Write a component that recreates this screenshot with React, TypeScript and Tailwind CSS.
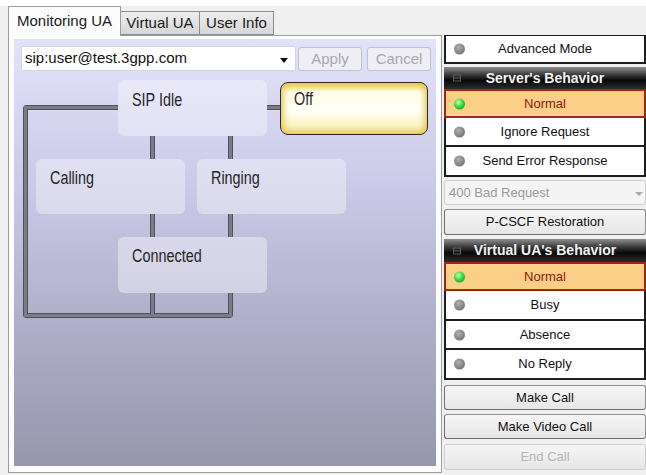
import React from 'react';

const UI_FONT = { fontFamily: '"Liberation Sans", Arial, sans-serif' };
const STATE_FONT = 'font-["Liberation_Sans",Arial,sans-serif] text-[18px] leading-[20px] text-[#262626] inline-block scale-x-[0.8] origin-left';

function Dot({ on }: { on?: boolean }) {
  return (
    <span
      className={`absolute left-[8px] top-1/2 -translate-y-1/2 w-[11px] h-[11px] rounded-full ${
        on
          ? 'bg-[radial-gradient(circle_at_40%_35%,#c8ffc0_0%,#35d93f_45%,#118a1a_100%)]'
          : 'bg-[radial-gradient(circle_at_40%_35%,#b0b0b0_0%,#858585_55%,#6c6c6c_100%)]'
      }`}
    />
  );
}

function RadioRow({ label, on, h, first }: { label: string; on?: boolean; h: string; first?: boolean }) {
  return (
    <div
      className={`relative flex items-center justify-center text-[13px] ${h} ${
        on
          ? 'bg-[#fccf88] text-[#8b1a10] border-2 border-[#9b2818]'
          : `bg-white text-[#111] border-x-2 border-b-2 border-[#1e1e1e] ${first ? 'border-t' : ''}`
      }`}
    >
      <Dot on={on} />
      <span>{label}</span>
    </div>
  );
}

function Header({ label, h }: { label: string; h: string }) {
  return (
    <div className={`relative flex items-center justify-center ${h} bg-[linear-gradient(#8e8e8e,#3a3a3a_35%,#080808_60%,#2c2c2c)]`}>
      <span className="absolute left-[9px] top-1/2 -translate-y-1/2 w-[8px] h-[7px] border border-[#5e5e5e] flex items-center">
        <span className="w-full h-px bg-[#5e5e5e]" />
      </span>
      <span className="text-[14px] font-bold text-[#f2f2f2]">{label}</span>
    </div>
  );
}

function Btn({ label, disabled, h, mt }: { label: string; disabled?: boolean; h: string; mt: string }) {
  return (
    <div
      className={`${h} ${mt} flex items-center justify-center text-[13px] rounded-[3px] border bg-[linear-gradient(#f6f6f6,#e6e6e6)] ${
        disabled ? 'text-[#b4b4b4] border-[#cdcdcd]' : 'text-[#111] border-[#8e8e8e] border-l-[#6e6e6e] border-b-[#6e6e6e]'
      }`}
    >
      {label}
    </div>
  );
}

function StateBox({ label, cls }: { label: string; cls: string }) {
  return (
    <div className={`absolute w-[149px] rounded-[6px] pl-[14px] ${cls}`}>
      <span className={STATE_FONT}>{label}</span>
    </div>
  );
}

export default function App() {
  return (
    <div className="w-[646px] h-[475px] bg-[#f0f0f0] overflow-hidden flex flex-col" style={UI_FONT}>
      <div className="h-[6px] bg-white" />
      <div className="flex">
        {/* tabbed monitor panel */}
        <div className="ml-[8px] w-[434px] flex flex-col">
          <div className="h-[29px] flex items-end">
            <div className="relative z-10 -mb-px w-[113px] h-[30px] bg-[#fcfcfc] border border-b-0 border-[#9c9c9c] flex items-center justify-center text-[15px] text-[#1a1a1a]">
              Monitoring UA
            </div>
            <div className="w-[79px] h-[24px] border border-[#8c8c8c] border-l-0 bg-[linear-gradient(#eeeeee,#d6d6d6)] flex items-center justify-center text-[15px] text-[#1a1a1a]">
              Virtual UA
            </div>
            <div className="w-[74px] h-[24px] border border-[#8c8c8c] border-l-0 bg-[linear-gradient(#eeeeee,#d6d6d6)] flex items-center justify-center text-[15px] text-[#1a1a1a]">
              User Info
            </div>
          </div>
          <div className="h-[438px] border border-[#9c9c9c] bg-[#fcfcfc] pl-[5px] pr-[5px] pt-[3px] pb-[6px]">
            <div className="relative h-full bg-[linear-gradient(#e2e2fa,#cacae8_35%,#b0b0cc_65%,#9696ac)]">
              <div className="flex pt-[7px] pl-[7px] gap-[2px]">
                <div className="relative w-[275px] h-[25px] bg-white border border-[#d4d4e4] rounded-[2px] flex items-center pl-[3px] text-[15px] text-[#111]">
                  sip:user@test.3gpp.com
                  <span className="absolute right-[7px] top-[11px] border-x-[4px] border-x-transparent border-t-[5px] border-t-[#111]" />
                </div>
                <div className="w-[64px] h-[24px] mt-px rounded-[3px] border border-[#c2c2cc] bg-[#eeeef4] flex items-center justify-center text-[15px] text-[#a8a8ae]">
                  Apply
                </div>
                <div className="ml-[3px] w-[64px] h-[24px] mt-px rounded-[3px] border border-[#c2c2cc] bg-[#eeeef4] flex items-center justify-center text-[15px] text-[#a8a8ae]">
                  Cancel
                </div>
              </div>

              {/* state diagram: pipes first, then the state boxes on top */}
              <div className="absolute left-[9px] top-[66px] w-[210px] h-[213px] border border-[#50505a] rounded-[3px]">
                <div className="w-full h-full border-[3px] border-[#7c7c88]">
                  <div className="w-full h-full border border-[#50505a]" />
                </div>
              </div>
              <div className="absolute left-[218px] top-[66px] w-[50px] h-[5px] border-y border-[#50505a] bg-[#7c7c88]" />
              <div className="absolute left-[136px] top-[70px] w-[5px] h-[205px] border-x border-[#50505a] bg-[#7c7c88]" />

              <StateBox label="SIP Idle" cls="left-[104px] top-[41px] h-[56px] pt-[9px] bg-[linear-gradient(#e8e8f9,#e2e2f5)]" />
              <StateBox label="Calling" cls="left-[22px] top-[120px] h-[55px] pt-[8px] bg-[linear-gradient(#e0e0f2,#dadaec)]" />
              <StateBox label="Ringing" cls="left-[183px] top-[120px] h-[55px] pt-[8px] bg-[linear-gradient(#e0e0f2,#dadaec)]" />
              <StateBox label="Connected" cls="left-[104px] top-[198px] h-[56px] pt-[8px] bg-[linear-gradient(#d8d8ea,#d2d2e4)]" />

              <div className="absolute left-[266px] top-[43px] w-[148px] h-[53px] rounded-[8px] border-[1.5px] border-[#2a2a2a] bg-[linear-gradient(#f3dc6a,#fffde8_18%,#fffff6_55%,#f8eca8)] shadow-[inset_0_0_7px_2px_#e2c040] pl-[13px] pt-[5px]">
                <span className={STATE_FONT}>Off</span>
              </div>
            </div>
          </div>
        </div>

        {/* behaviour controls */}
        <div className="ml-[2px] mt-[29px] w-[202px] flex flex-col">
          <RadioRow label="Advanced Mode" h="h-[29px]" first />
          <div className="mt-[3px]">
            <Header label="Server's Behavior" h="h-[22px]" />
          </div>
          <RadioRow label="Normal" on h="h-[29px]" />
          <RadioRow label="Ignore Request" h="h-[29px]" />
          <RadioRow label="Send Error Response" h="h-[30px]" />
          <div className="relative mt-[3px] h-[25px] rounded-[3px] border border-[#cfcfcf] bg-[#f4f4f4] flex items-center pl-[4px] text-[13px] text-[#9a9a9a]">
            400 Bad Request
            <span className="absolute right-[2px] top-[11px] border-x-[4px] border-x-transparent border-t-[4px] border-t-[#a8a8a8]" />
          </div>
          <Btn label="P-CSCF Restoration" h="h-[26px]" mt="mt-[4px]" />
          <div className="mt-[4px]">
            <Header label="Virtual UA's Behavior" h="h-[23px]" />
          </div>
          <RadioRow label="Normal" on h="h-[29px]" />
          <RadioRow label="Busy" h="h-[30px]" />
          <RadioRow label="Absence" h="h-[29px]" />
          <RadioRow label="No Reply" h="h-[30px]" />
          <Btn label="Make Call" h="h-[25px]" mt="mt-[5px]" />
          <Btn label="Make Video Call" h="h-[25px]" mt="mt-[4px]" />
          <Btn label="End Call" disabled h="h-[26px]" mt="mt-[5px]" />
        </div>
      </div>
    </div>
  );
}
